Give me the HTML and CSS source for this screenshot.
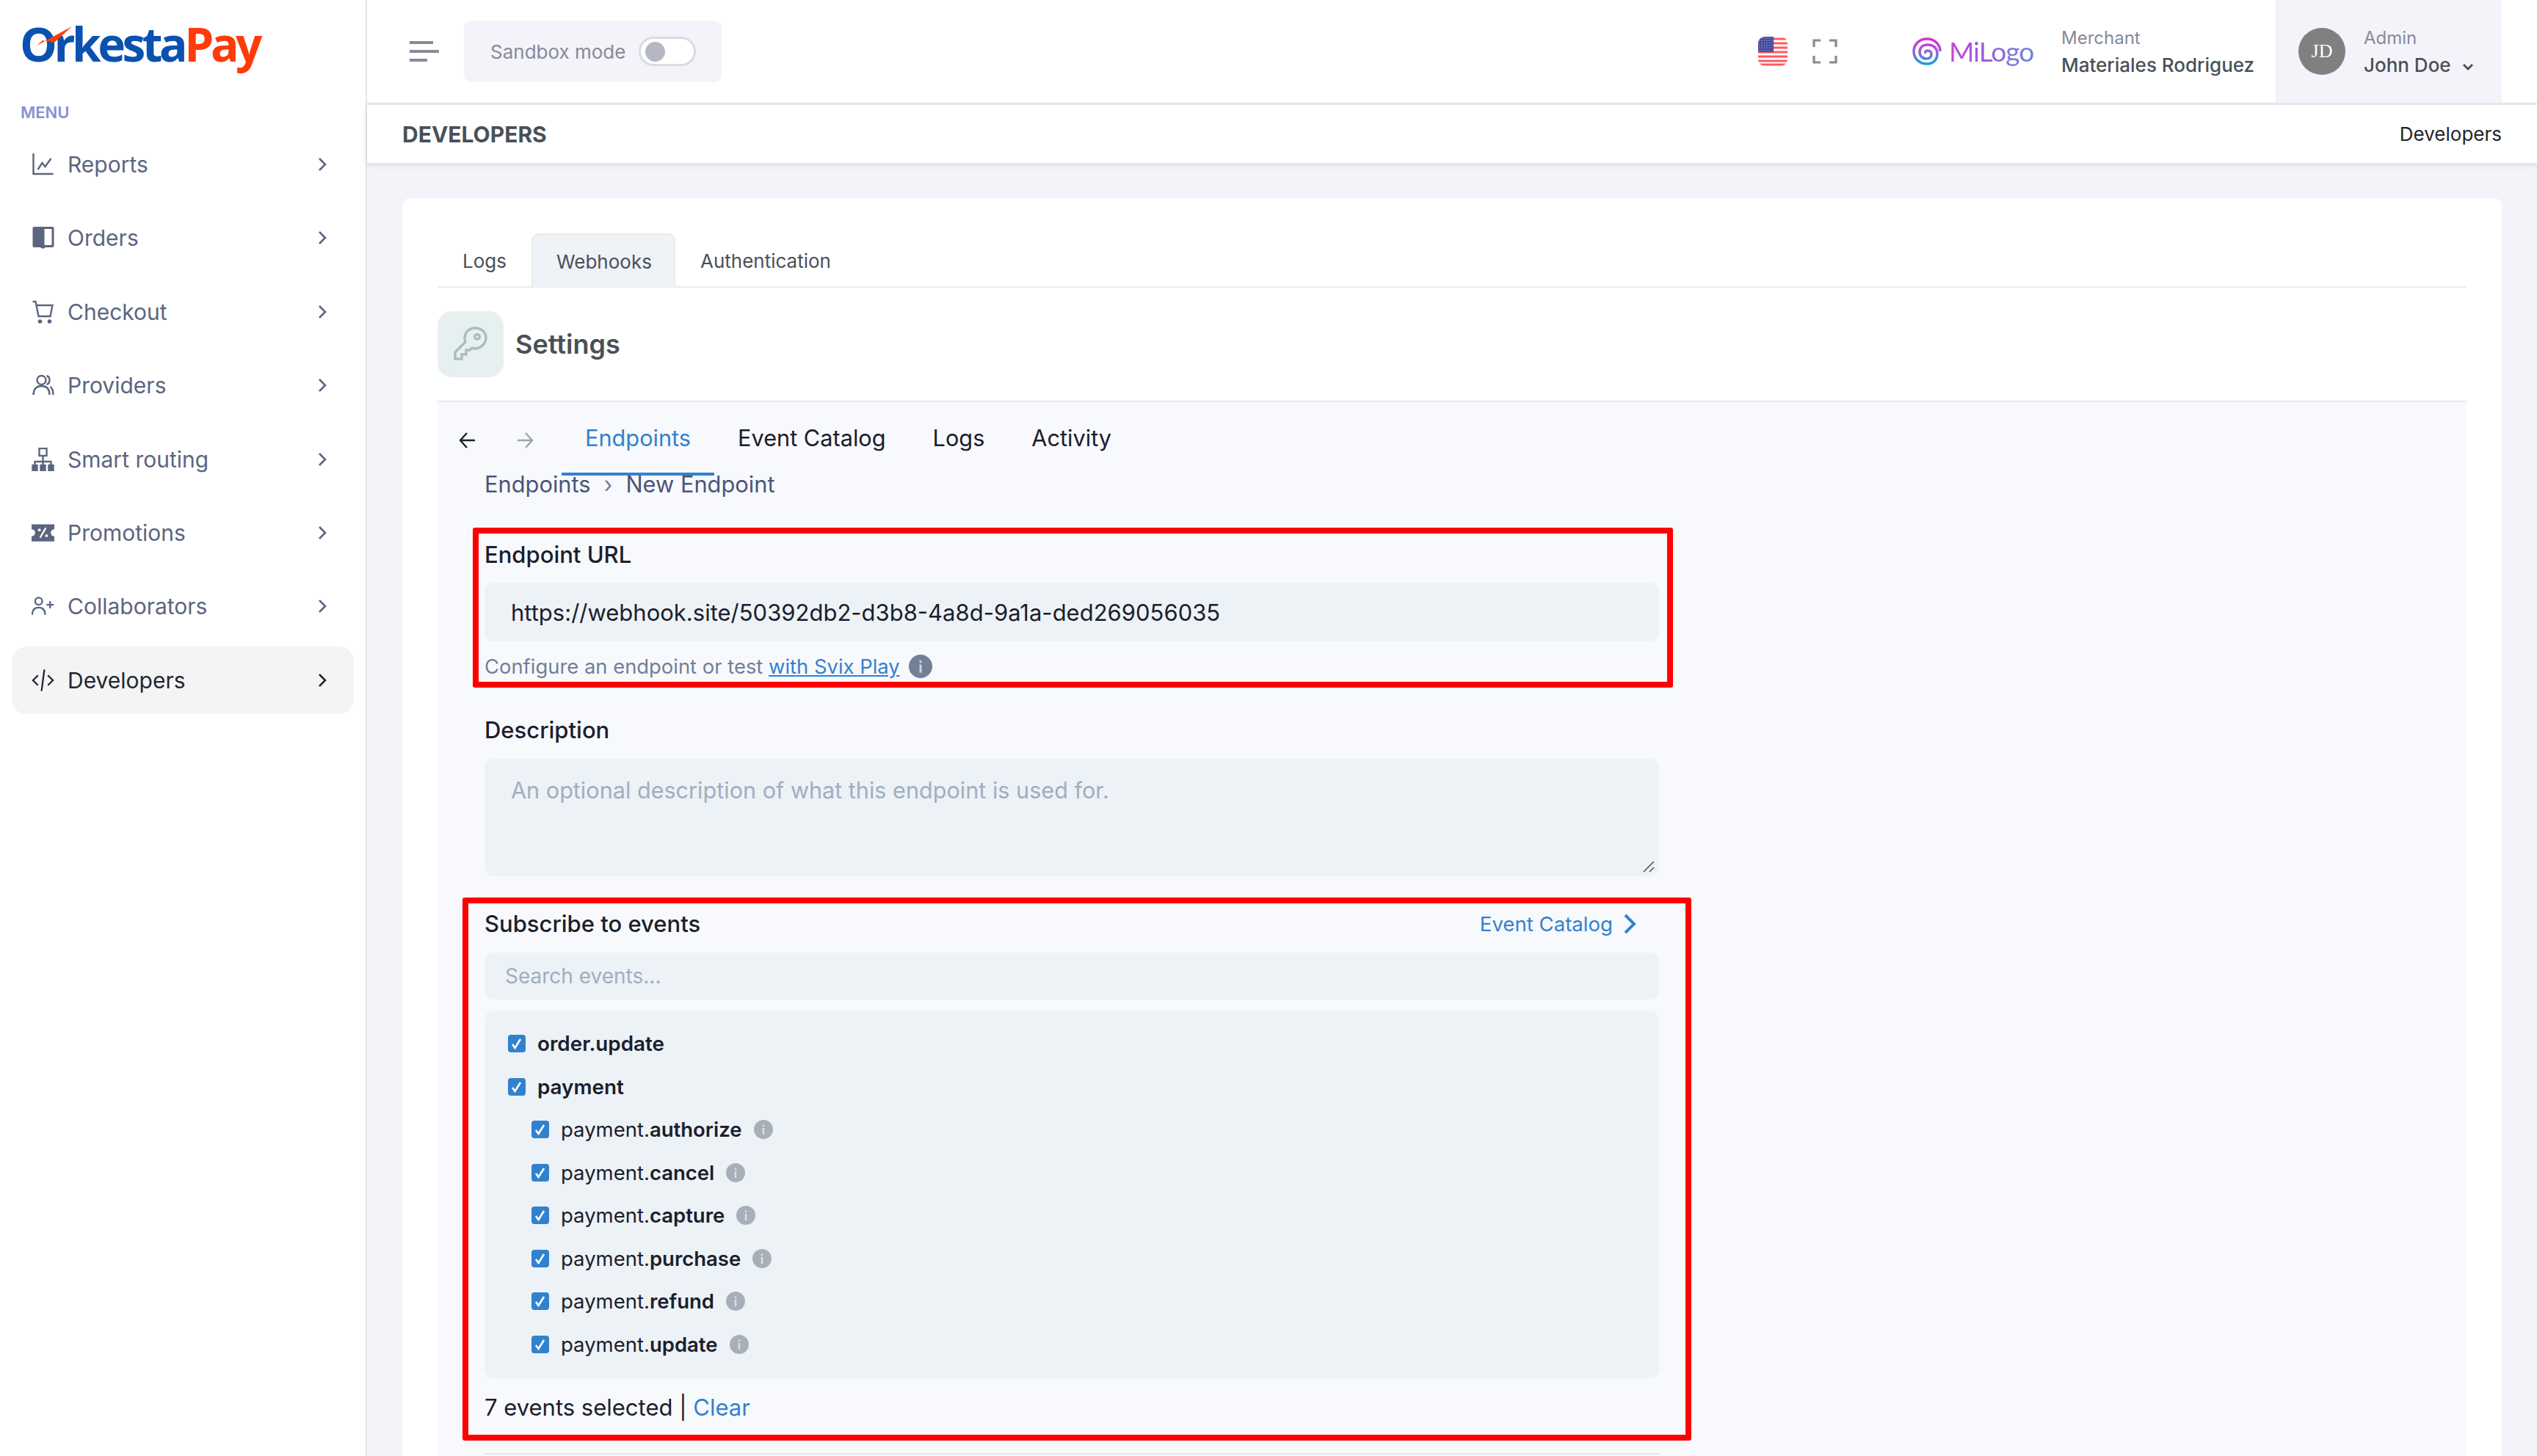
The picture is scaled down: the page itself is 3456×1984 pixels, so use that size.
FILE: index.html
```html
<!DOCTYPE html>
<html lang="en">
<head>
  <meta charset="UTF-8" />
  <title>OrkestaPay - Developers</title>
  <link rel="stylesheet" href="styles.css">
</head>
<body>
  <svg class="defs" width="0" height="0">
    <symbol id="chev" viewBox="0 0 12 20"><path d="M2 2l8 8-8 8" fill="none" stroke="currentColor" stroke-width="2.6"/></symbol>
    <symbol id="tick" viewBox="0 0 24 24"><path d="M6 13l3.5 5L17 6" fill="none" stroke="#fff" stroke-width="2.6"/></symbol>
    <symbol id="info" viewBox="0 0 26 26"><circle cx="13" cy="13" r="13" fill="currentColor"/><rect x="11.8" y="11" width="2.4" height="9" fill="#edf2f7" opacity=".75"/><rect x="11.8" y="6.5" width="2.4" height="2.6" fill="#edf2f7" opacity=".75"/></symbol>
  </svg>

  <div class="app">
    <aside class="sidebar">
      <div class="logo">
        <span class="logo-blue">Orkesta</span><span class="logo-red">Pay</span>
        <svg class="logo-swoosh" width="48" height="26" viewBox="0 0 48 26"><path d="M0 26L48 0 24 22 8 19z" fill="#ff3b0a"/></svg>
      </div>
      <div class="menu-title">MENU</div>
      <nav class="side-nav">
        <a class="side-item">
          <svg class="side-icon" viewBox="0 0 30 32" fill="none" stroke="currentColor" stroke-width="2.4"><path d="M2 1v28h27"/><path d="M8 23l6-9 4 5 8-11"/></svg>
          <span>Reports</span><svg class="side-chev"><use href="#chev"/></svg>
        </a>
        <a class="side-item">
          <svg class="side-icon" viewBox="0 0 30 32"><path d="M1 3a2 2 0 012-2h25a2 2 0 012 2v24a2 2 0 01-2 2H19l-4 2-4-2H3a2 2 0 01-2-2z" fill="currentColor"/><rect x="17" y="4" width="10" height="22" fill="#fff"/></svg>
          <span>Orders</span><svg class="side-chev"><use href="#chev"/></svg>
        </a>
        <a class="side-item">
          <svg class="side-icon" viewBox="0 0 30 32" fill="none" stroke="currentColor" stroke-width="2.4"><path d="M1 2h4l4 20h16l3-15H6"/><circle cx="11" cy="29" r="1.6" fill="currentColor"/><circle cx="24" cy="29" r="1.6" fill="currentColor"/></svg>
          <span>Checkout</span><svg class="side-chev"><use href="#chev"/></svg>
        </a>
        <a class="side-item">
          <svg class="side-icon" viewBox="0 0 30 32" fill="none" stroke="currentColor" stroke-width="2.4"><circle cx="13" cy="9" r="6"/><path d="M2 29c0-8 4-12 11-12s11 4 11 12"/><path d="M20 3c3 1 4 3 4 6s-1 5-4 6"/><path d="M25 18c3 2 4 6 4 11"/></svg>
          <span>Providers</span><svg class="side-chev"><use href="#chev"/></svg>
        </a>
        <a class="side-item">
          <svg class="side-icon" viewBox="0 0 30 32" fill="none" stroke="currentColor" stroke-width="2.4"><rect x="10" y="1" width="10" height="10"/><path d="M15 11v8M4 24v-5h22v5M15 19v5"/><rect x="1" y="24" width="6" height="7" fill="currentColor"/><rect x="12" y="24" width="6" height="7" fill="currentColor"/><rect x="23" y="24" width="6" height="7" fill="currentColor"/></svg>
          <span>Smart routing</span><svg class="side-chev"><use href="#chev"/></svg>
        </a>
        <a class="side-item">
          <svg class="side-icon" viewBox="0 0 32 24"><path d="M0 0h32v7a5 5 0 000 10v7H0v-7a5 5 0 000-10z" fill="currentColor"/><path d="M12 19l8-14" stroke="#fff" stroke-width="2.4"/><circle cx="11" cy="8" r="2" fill="#fff"/><circle cx="21" cy="16" r="2" fill="#fff"/></svg>
          <span>Promotions</span><svg class="side-chev"><use href="#chev"/></svg>
        </a>
        <a class="side-item">
          <svg class="side-icon" viewBox="0 0 32 32" fill="none" stroke="currentColor" stroke-width="2.4"><circle cx="10" cy="9" r="5"/><path d="M1 28c0-7 3-10 9-10s9 3 9 10"/><path d="M21 14h10M26 9v10"/></svg>
          <span>Collaborators</span><svg class="side-chev"><use href="#chev"/></svg>
        </a>
        <a class="side-item side-item-active">
          <svg class="side-icon" viewBox="0 0 32 32" fill="none" stroke="currentColor" stroke-width="2.4"><path d="M9 9l-7 7 7 7M23 9l7 7-7 7M18 1l-4 30"/></svg>
          <span>Developers</span><svg class="side-chev"><use href="#chev"/></svg>
        </a>
      </nav>
    </aside>

    <main class="main">
      <header class="topbar">
        <svg class="burger" width="40" height="28" viewBox="0 0 40 28"><path d="M0 2h32M0 14h40M0 26h24" stroke="#878a99" stroke-width="4"/></svg>
        <div class="sandbox">
          <span>Sandbox mode</span>
          <span class="toggle"><span class="toggle-knob"></span></span>
        </div>
        <div class="spacer"></div>
        <svg class="flag" width="40" height="40" viewBox="0 0 40 40">
          <defs><pattern id="stars" width="3.4" height="3.4" patternUnits="userSpaceOnUse"><circle cx="1.7" cy="1.7" r=".7" fill="#c9cdea"/></pattern></defs>
          <rect width="40" height="40" fill="#fff"/>
          <path d="M0 3h40M0 9h40M0 15h40M0 21h40M0 27h40M0 33h40M0 38h40" stroke="#ff5a60" stroke-width="3.2"/>
          <rect width="21" height="21" fill="#41479b"/>
          <rect width="21" height="21" fill="url(#stars)"/>
        </svg>
        <svg class="fullscreen" width="34" height="34" viewBox="0 0 34 34" fill="none" stroke="#878a99" stroke-width="3.2"><path d="M11 2H2v9M23 2h9v9M11 32H2v-9M23 32h9v-9"/></svg>
        <svg class="spiral" width="40" height="38" viewBox="0 0 40 38" fill="none" stroke-width="3.6">
          <defs><linearGradient id="sp" x1="0" y1="0" x2="0" y2="1"><stop offset="0" stop-color="#e22bd0"/><stop offset=".55" stop-color="#8c68d8"/><stop offset="1" stop-color="#1a9fdc"/></linearGradient></defs>
          <path d="M38 19c0-10-8-17-18-17S2 9 2 19s8 17 18 17 14-7 14-14-5-12-13-12-11 5-11 10 4 9 9 9 7-3 7-6-2-5-5-5-4 2-3 4" stroke="url(#sp)"/>
        </svg>
        <span class="milogo">MiLogo</span>
        <div class="merchant">
          <span class="small-label">Merchant</span>
          <span class="merchant-name">Materiales Rodriguez</span>
        </div>
        <div class="user">
          <span class="avatar">JD</span>
          <div class="user-text">
            <span class="small-label">Admin</span>
            <span class="user-name">John Doe <svg width="16" height="10" viewBox="0 0 16 10"><path d="M2 2l6 6 6-6" fill="none" stroke="#495057" stroke-width="2.8"/></svg></span>
          </div>
        </div>
      </header>

      <div class="pagebar">
        <h1>DEVELOPERS</h1>
        <span>Developers</span>
      </div>

      <section class="card">
        <div class="tabs">
          <span class="tab">Logs</span>
          <span class="tab tab-active">Webhooks</span>
          <span class="tab">Authentication</span>
        </div>
        <div class="settings">
          <span class="settings-icon">
            <svg width="50" height="50" viewBox="0 0 50 50" fill="none" stroke="#a9bcc0" stroke-width="3.4"><path d="M31 3c-8 0-14 6-14 14 0 2 .5 4 1 5L4 36v9h9v-6h6v-6h5l3-3c1 .5 3 1 4 1 8 0 15-7 15-15S39 3 31 3z"/><circle cx="34" cy="15" r="3.4"/></svg>
          </span>
          <h2>Settings</h2>
        </div>

        <div class="panel">
          <div class="panel-nav">
            <svg class="arrow arrow-back" viewBox="0 0 22 22" fill="none" stroke="#1a202c" stroke-width="2.4"><path d="M11 1L2 11l9 10M2 11h20"/></svg>
            <svg class="arrow arrow-next" viewBox="0 0 22 22" fill="none" stroke="#a0a3ad" stroke-width="2.4"><path d="M11 1l9 10-9 10M20 11H0"/></svg>
            <a class="panel-tab panel-tab-active">Endpoints</a>
            <a class="panel-tab">Event Catalog</a>
            <a class="panel-tab">Logs</a>
            <a class="panel-tab">Activity</a>
          </div>
          <div class="crumbs"><span>Endpoints</span><i>›</i><span>New Endpoint</span></div>

          <form class="form">
            <label class="field-label">Endpoint URL</label>
            <input class="field-input" type="text" value="https://webhook.site/50392db2-d3b8-4a8d-9a1a-ded269056035">
            <p class="help">Configure an endpoint or test <a>with Svix Play</a><svg class="help-icon"><use href="#info"/></svg></p>

            <label class="field-label label-desc">Description</label>
            <div class="area-wrap">
              <textarea class="field-area" placeholder="An optional description of what this endpoint is used for."></textarea>
              <svg class="area-grip" width="16" height="16" viewBox="0 0 16 16" stroke="#555" stroke-width="1.6"><path d="M1 15L15 1M9 15l6-6"/></svg>
            </div>

            <div class="subscribe-head">
              <label class="field-label">Subscribe to events</label>
              <a class="catalog-link">Event Catalog <svg width="18" height="30"><use href="#chev"/></svg></a>
            </div>
            <input class="search-input" type="text" placeholder="Search events...">

            <div class="events">
              <div class="event event-top"><span class="check"><svg><use href="#tick"/></svg></span><b>order.update</b></div>
              <div class="event event-top"><span class="check"><svg><use href="#tick"/></svg></span><b>payment</b></div>
              <div class="event event-sub"><span class="check"><svg><use href="#tick"/></svg></span><span>payment.<b>authorize</b></span><svg class="event-info"><use href="#info"/></svg></div>
              <div class="event event-sub"><span class="check"><svg><use href="#tick"/></svg></span><span>payment.<b>cancel</b></span><svg class="event-info"><use href="#info"/></svg></div>
              <div class="event event-sub"><span class="check"><svg><use href="#tick"/></svg></span><span>payment.<b>capture</b></span><svg class="event-info"><use href="#info"/></svg></div>
              <div class="event event-sub"><span class="check"><svg><use href="#tick"/></svg></span><span>payment.<b>purchase</b></span><svg class="event-info"><use href="#info"/></svg></div>
              <div class="event event-sub"><span class="check"><svg><use href="#tick"/></svg></span><span>payment.<b>refund</b></span><svg class="event-info"><use href="#info"/></svg></div>
              <div class="event event-sub"><span class="check"><svg><use href="#tick"/></svg></span><span>payment.<b>update</b></span><svg class="event-info"><use href="#info"/></svg></div>
            </div>

            <p class="selected">7 events selected | <a>Clear</a></p>
            <div class="form-rule"></div>

            <div class="redbox redbox-url"></div>
            <div class="redbox redbox-events"></div>
          </form>
        </div>
      </section>
    </main>
  </div>
</body>
</html>
```

FILE: styles.css
```css
* {
  box-sizing: border-box;
}

body {
  margin: 0;
  height: 1984px;
  overflow: hidden;
  font-family: Inter, "Liberation Sans", sans-serif;
  background-color: #f3f3f9;
  color: #1a202c;
}

.defs {
  position: absolute;
}

.app {
  display: flex;
  height: 1984px;
  overflow: hidden;
}

/* sidebar */
.sidebar {
  width: 500px;
  flex-shrink: 0;
  background-color: #fff;
  border-right: 2px solid #e4e5ea;
}

.logo {
  position: relative;
  height: 112px;
  padding: 20px 0 0 27px;
  font-family: "Open Sans", sans-serif;
  font-size: 64px;
  font-weight: 700;
  letter-spacing: -4.5px;
  line-height: 80px;
}

.logo-blue {
  color: #0b52b0;
}

.logo-red {
  color: #ff3b0a;
}

.logo-swoosh {
  position: absolute;
  left: 50px;
  top: 36px;
}

.menu-title {
  margin: 28px 0 0 28px;
  font-size: 22px;
  font-weight: 600;
  line-height: 26px;
  color: #8791d3;
}

.side-nav {
  margin-top: 12px;
  display: flex;
  flex-direction: column;
}

.side-item {
  display: flex;
  align-items: center;
  height: 92px;
  margin: 0 16px 8.4px;
  padding: 0 37px 0 27px;
  border-radius: 20px;
  font-size: 30px;
  color: #5b6580;
}

.side-item span {
  flex: 1;
}

.side-item-active {
  background-color: #f4f4f5;
  color: #212733;
}

.side-icon {
  width: 31px;
  height: 32px;
  margin-right: 18px;
}

.side-chev {
  width: 12px;
  height: 20px;
}

/* top bar */
.main {
  flex: 1;
  min-width: 0;
}

.topbar {
  display: flex;
  align-items: center;
  height: 143px;
  padding-left: 58px;
  background-color: #fff;
  border-bottom: 3px solid #e9edf0;
}

.sandbox {
  display: flex;
  align-items: center;
  height: 84px;
  width: 351px;
  margin-left: 34px;
  padding-left: 36px;
  background-color: #f3f3f9;
  border-radius: 10px;
  font-size: 26px;
  color: #878a99;
}

.toggle {
  display: flex;
  align-items: center;
  width: 78px;
  height: 40px;
  margin-left: 18px;
  padding-left: 6px;
  background-color: #fff;
  border: 3px solid #d8dde3;
  border-radius: 20px;
}

.toggle-knob {
  width: 27px;
  height: 27px;
  border-radius: 50%;
  background-color: #b5b8c4;
}

.spacer {
  flex: 1;
}

.flag {
  border-radius: 9px;
}

.fullscreen {
  margin-left: 34px;
}

.spiral {
  margin-left: 102px;
}

.milogo {
  margin-left: 10px;
  width: 153px;
  font-family: Lato, sans-serif;
  font-size: 37px;
  line-height: 48px;
  letter-spacing: -1px;
  background: linear-gradient(90deg, #c443d8, #6f80dc 70%, #3b9bdc);
  -webkit-background-clip: text;
  -webkit-text-fill-color: transparent;
}

.merchant {
  display: flex;
  flex-direction: column;
  width: 292px;
  padding-top: 4px;
}

.small-label {
  font-size: 24px;
  line-height: 30px;
  color: #878a99;
}

.merchant-name,
.user-name {
  margin-top: 4px;
  font-size: 26px;
  line-height: 36px;
  font-weight: 500;
  color: #495057;
}

.user {
  display: flex;
  align-items: center;
  width: 308px;
  height: 140px;
  margin-right: 48px;
  padding-left: 31px;
  background-color: #f3f3f9;
}

.avatar {
  display: flex;
  align-items: center;
  justify-content: center;
  width: 64px;
  height: 64px;
  border-radius: 50%;
  background-color: #808080;
  color: #fff;
  font-family: "Liberation Serif", serif;
  font-size: 26px;
}

.user-text {
  display: flex;
  flex-direction: column;
  margin-left: 25px;
  padding-top: 4px;
}

.user-name svg {
  margin-left: 8px;
  vertical-align: 2px;
}

/* page title bar */
.pagebar {
  display: flex;
  align-items: center;
  justify-content: space-between;
  height: 79px;
  padding: 0 48px;
  background-color: #fff;
  box-shadow: 0 2px 8px rgba(56, 65, 74, 0.15);
}

.pagebar h1 {
  margin: 0;
  font-size: 30px;
  font-weight: 700;
  color: #495057;
}

.pagebar span {
  font-size: 26px;
  color: #212529;
}

/* card */
.card {
  margin: 48px 48px 0;
  padding: 48px 48px 0;
  height: 1800px;
  background-color: #fff;
  border-radius: 10px;
}

.tabs {
  display: flex;
  height: 74px;
  border-bottom: 2px solid #e9ebec;
}

.tab {
  display: flex;
  align-items: center;
  height: 74px;
  padding: 0 34px;
  font-size: 26px;
  color: #495057;
}

.tab-active {
  width: 196px;
  padding: 0 32px;
  background-color: #eff2f7;
  border: 2px solid #e9ebec;
  border-bottom: 0;
  border-radius: 10px 10px 0 0;
}

.settings {
  display: flex;
  align-items: center;
  height: 156px;
  border-bottom: 2px solid #e9ebec;
}

.settings-icon {
  display: flex;
  align-items: center;
  justify-content: center;
  width: 90px;
  height: 90px;
  background-color: #e6f0f1;
  border-radius: 20px;
}

.settings h2 {
  margin: 0 0 0 16px;
  font-size: 36px;
  font-weight: 600;
  color: #495057;
}

.panel {
  height: 1500px;
  background-color: #f8f9fd;
}

.panel-nav {
  display: flex;
  align-items: flex-end;
  height: 100px;
}

.arrow {
  width: 22px;
  height: 22px;
  margin-bottom: 37px;
}

.arrow-back {
  margin-left: 29px;
}

.arrow-next {
  margin-left: 58px;
  margin-right: 38px;
}

.panel-tab {
  display: flex;
  align-items: center;
  height: 100px;
  padding: 0 32px;
  font-size: 30.7px;
  color: #1a202c;
  border-bottom: 4px solid transparent;
}

.panel-tab-active {
  color: #3182ce;
  border-bottom-color: #3182ce;
}

.crumbs {
  display: flex;
  align-items: center;
  height: 40px;
  margin: -9px 0 0 64px;
  font-size: 30.8px;
  color: #4a5578;
}

.crumbs i {
  margin: 0 18px;
  font-style: normal;
  color: #718096;
}

.form {
  position: relative;
  width: 1600px;
  margin-left: 64px;
  padding-top: 53px;
}

.field-label {
  display: block;
  font-size: 31px;
  font-weight: 500;
  line-height: 48px;
  color: #1a202c;
}

.field-input {
  display: block;
  width: 100%;
  height: 80px;
  margin-top: 14px;
  padding: 0 36px;
  background-color: #edf2f7;
  border: 0;
  border-radius: 12px;
  font: 31px Inter, sans-serif;
  color: #1a202c;
}

.help {
  display: flex;
  align-items: center;
  height: 36px;
  margin: 16px 0 0;
  font-size: 27.4px;
  color: #718096;
  white-space: pre;
}

.help a,
.selected a,
.catalog-link {
  color: #3182ce;
}

.help a {
  text-decoration: underline;
}

.help-icon {
  width: 32px;
  height: 32px;
  margin-left: 12px;
  color: #718096;
}

.label-desc {
  margin-top: 45px;
}

.area-wrap {
  position: relative;
  margin-top: 15px;
}

.field-area {
  display: block;
  width: 100%;
  height: 160px;
  padding: 24px 36px;
  background-color: #edf2f7;
  border: 0;
  border-radius: 12px;
  resize: none;
  font: 30.6px Inter, sans-serif;
}

.area-grip {
  position: absolute;
  right: 6px;
  bottom: 5px;
}

.field-area::placeholder,
.search-input::placeholder {
  color: #a0aec0;
  opacity: 1;
}

.subscribe-head {
  display: flex;
  align-items: center;
  justify-content: space-between;
  margin-top: 41px;
  padding-right: 31px;
}

.catalog-link {
  display: flex;
  align-items: center;
  gap: 14px;
  font-size: 27.6px;
}

.search-input {
  display: block;
  width: 100%;
  height: 64px;
  margin-top: 15px;
  padding: 0 28px;
  background-color: #edf2f7;
  border: 0;
  border-radius: 12px;
  font: 28px Inter, sans-serif;
}

.events {
  margin-top: 16px;
  padding: 15px 32px 17px;
  background-color: #edf2f7;
  border-radius: 12px;
}

.event {
  display: flex;
  align-items: center;
  height: 58.5px;
  font-size: 27.5px;
  color: #1a202c;
}

.event b {
  font-weight: 600;
}

.event-top {
  font-size: 27.8px;
}

.event-sub {
  padding-left: 32px;
}

.check {
  display: block;
  width: 24px;
  height: 24px;
  margin-right: 16px;
  background-color: #3182ce;
  border-radius: 4px;
}

.check svg {
  display: block;
  width: 24px;
  height: 24px;
}

.event-info {
  width: 26px;
  height: 26px;
  margin-left: 16px;
  color: #a9afb9;
}

.selected {
  margin: 16px 0 0;
  font-size: 31px;
  line-height: 48px;
}

.form-rule {
  height: 2px;
  margin-top: 38px;
  background-color: #e2e8f0;
}

/* red annotation boxes */
.redbox {
  position: absolute;
  border: 8px solid #ff0000;
  border-radius: 3px;
}

.redbox-url {
  left: -16px;
  top: 40px;
  width: 1635px;
  height: 218px;
}

.redbox-events {
  left: -30px;
  top: 544px;
  width: 1674px;
  height: 740px;
}
```
